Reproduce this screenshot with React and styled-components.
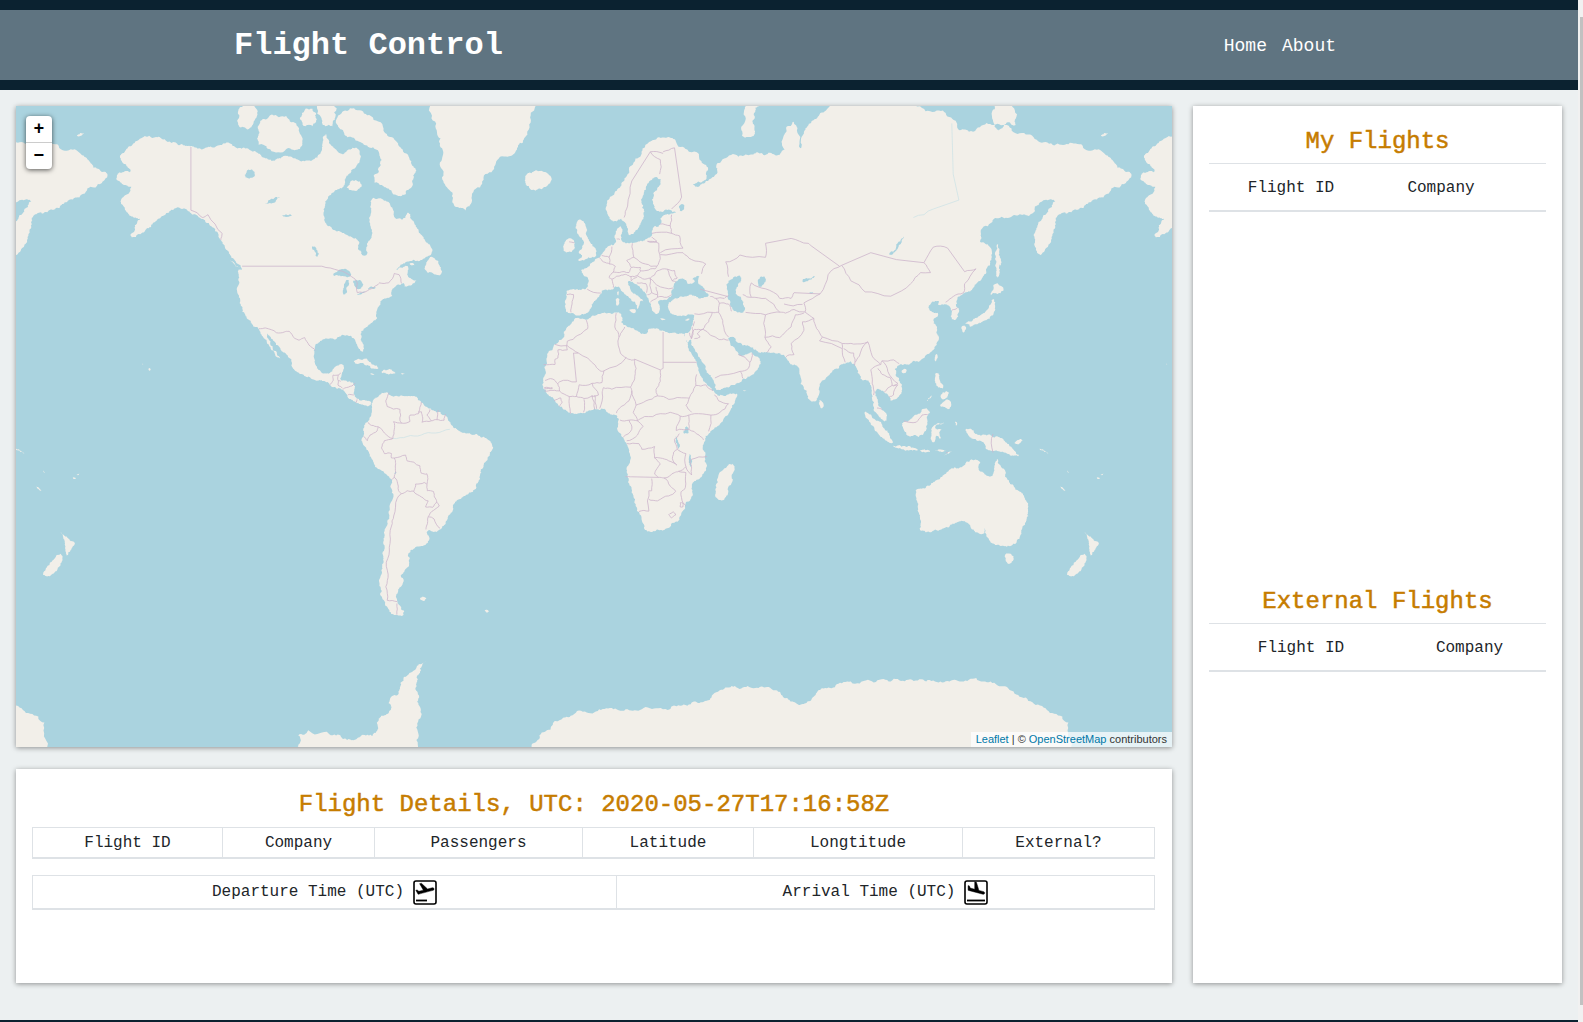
import React from "react";
import styled, { createGlobalStyle } from "styled-components";

const MAP_W = 1156;
const MAP_H = 641;
const LON0_X = 576;
const LAT0_Y = 320.5;
const WORLD = 1024;

// rough coastlines, [lon, lat]
const LAND = [
	// north america
	[[-168,65.6],[-164,66.5],[-162,66.2],[-163,67],[-166.5,68.3],[-163,69.5],[-157,71],[-152,70.7],[-145,70],[-141,69.6],[-135,69.3],[-128,70.2],[-125,69.5],[-118,69],[-115,68],[-110,68],[-108,68.6],[-102,67.8],[-97,68],[-95,69],[-94,71.5],[-92,70],[-88,68.5],[-85,69.5],[-82,69.5],[-81,68],[-84,66.5],[-87,65.5],[-87,64],[-91,63.5],[-93.5,61.8],[-94.7,59],[-92.5,57],[-88,56.3],[-85,55.3],[-82.3,55],[-82.2,52.9],[-80.5,51.3],[-79,51.5],[-79,54],[-77,56],[-78.5,58.7],[-77.5,60],[-78,62.4],[-73.5,62.3],[-70,60.8],[-69.5,58.8],[-66,58.5],[-64.5,60.3],[-62,57.5],[-60,55.5],[-57,53.5],[-55.8,52.3],[-58,51],[-61,50.2],[-65,50.2],[-67,49.3],[-69.5,47.8],[-65,49.2],[-64.5,48.5],[-65,47],[-64,46],[-61,45.5],[-66,43.8],[-66,45],[-67,44.8],[-70,43.7],[-70.8,42.2],[-70,41.7],[-74,40.7],[-75.5,38],[-76,37],[-75.5,35.3],[-78,33.9],[-81,32],[-81.5,30.5],[-80,26.8],[-80.5,25.2],[-81.8,26],[-82.8,28],[-84,30],[-86,30.4],[-89,30.3],[-90,29.2],[-93,29.7],[-95,29.2],[-97.3,27.5],[-97.7,24],[-97.5,21.5],[-95.5,18.8],[-94,18.2],[-91.5,18.6],[-90.5,20.5],[-88,21.5],[-87,20.8],[-87.8,18.3],[-88.8,16],[-86,15.9],[-83.3,15],[-83.7,11.5],[-82.5,9.3],[-80,9.2],[-77.5,8.7],[-77.9,7.2],[-80,7.5],[-81.5,7.8],[-83,8.3],[-85.5,10],[-87.5,13],[-91.5,14],[-94.5,16.2],[-97,15.9],[-101.5,17.5],[-105.5,20],[-105.5,22.5],[-109,26],[-112.5,29.5],[-114.7,31.7],[-113,28],[-110,24],[-109.5,23],[-112,25],[-115,29],[-117.2,32.5],[-120.5,34.5],[-122.5,37.5],[-124.3,40.4],[-124,46.2],[-124.7,48.4],[-122.5,48],[-125,50],[-128,52],[-130.5,54.5],[-133,57],[-137,58.6],[-140,59.8],[-146,60.8],[-149,60],[-152,59],[-154,58],[-158,56.2],[-163,54.8],[-160,58.5],[-158,58.7],[-162,59],[-165,61],[-166,62],[-161,64],[-165,64.5]],
	// greenland
	[[-73,78.2],[-66,81],[-50,82.5],[-32,83.6],[-20,81.5],[-20,77],[-22,72],[-25,69.5],[-32,68],[-40,65],[-43.5,60],[-48,61],[-52,65],[-53,69],[-55,72],[-60,76],[-70,76.2]],
	// canadian islands
	[[-62,66],[-65,63],[-68,62.5],[-72,64],[-78,65],[-73,68],[-80,70],[-88,71],[-90,73.5],[-80,73.7],[-71,71],[-68,70],[-62,67]],
	[[-117,69.5],[-105,69],[-101,70],[-105,73],[-115,73.3],[-118,71]],
	[[-125,72],[-120,71.5],[-117,74],[-124,74.3]],
	[[-95,72],[-90,72],[-91,75.5],[-96,75.5]],
	[[-102,72],[-97,72],[-97,73.8],[-102,73.8]],
	[[-87,63.5],[-80,64],[-84,65.5]],
	[[-59,47.7],[-53,46.7],[-53,48.5],[-56,51.5],[-58,50]],
	[[-128,50.7],[-123.5,48.4],[-125,49]],
	[[-64,49.9],[-62,49.2],[-64,49.2]],
	// caribbean
	[[-85,21.9],[-80,23.2],[-74.2,20.2],[-77.7,19.9],[-78,20.8]],
	[[-74.4,18.5],[-72.8,19.9],[-68.4,18.6],[-71,18]],
	[[-78.3,18.4],[-76.3,18.1],[-77,17.8]],
	[[-67.2,18.5],[-65.6,18.3],[-66.8,17.9]],
	// south america
	[[-77.5,8.5],[-75.5,10.7],[-72,12.2],[-71.5,10.8],[-68,10.7],[-62,10.7],[-60,8.5],[-57,6],[-52,4.8],[-50,1],[-48,-1],[-44,-2.5],[-39,-3],[-35.2,-5.5],[-35,-9],[-39,-14],[-39.5,-18],[-41,-22],[-45,-23.7],[-48.5,-26],[-50,-30],[-53.5,-34],[-55,-35],[-58.3,-34],[-57,-36.5],[-58,-38.3],[-62,-39],[-65,-41],[-63.8,-42.5],[-65.5,-45],[-67.5,-46.5],[-65.8,-47.5],[-69,-51],[-68.3,-52.5],[-65.3,-54.8],[-69,-55.3],[-72,-54],[-75,-50],[-74,-45],[-73,-41],[-73.5,-37],[-71.5,-30],[-70,-20],[-71,-17.5],[-76,-14],[-79,-8],[-81.3,-5],[-80,-2.5],[-80.5,0],[-78.5,2],[-77.5,4],[-77.5,7]],
	[[-61,-51.5],[-58,-51.3],[-59,-52.3]],
	[[-38,-54],[-36,-54.2],[-37,-54.7]],
	// eurasia
	[[-9,37],[-9.5,38.8],[-8.8,42],[-9,43.2],[-4,43.5],[-1.5,43.5],[-1,46],[-4.5,48],[-1.5,48.7],[1.5,50.5],[4,52],[5,53.3],[8.5,53.8],[8.2,56.5],[10.5,57.7],[10,55],[11,54],[14,54],[18.5,54.7],[21,55.3],[21.5,57.5],[24,57.2],[24,59.2],[28,59.6],[30,60],[23,60],[21.5,61],[21.5,63],[25,65],[22,65.8],[18,63],[17.3,61],[18.8,59.8],[16.5,57],[14.5,56],[13,55.5],[11,59],[8,58],[5.5,59],[5,62],[10,64],[14,67.5],[19,70],[25,71],[31,70],[41,67],[40,65],[35,64.5],[37,64],[40,64.8],[44,66],[44,68],[54,68.5],[60,69],[68,68.5],[67,71.5],[72,72.8],[73,68.5],[75,72],[80,73],[87,75],[100,76.5],[105,77.6],[113,74],[125,73.5],[130,71],[140,72.5],[150,71.5],[160,69.7],[170,70],[180,69],[185,67],[190.5,66],[187,64.5],[179,62.5],[175,61.8],[170,60],[164,59.8],[163,58],[162,56],[160,53],[156.7,51],[155.5,56],[157,58],[161,60.3],[163.5,62.3],[156,61.5],[155,59.3],[150,59.5],[142,59],[135,54.7],[140.5,53.5],[140.5,50],[138,46.5],[133,43],[130.5,42.5],[127.5,39.8],[129.5,36.5],[126.5,34.5],[126.5,37.5],[125,39.6],[121.5,39],[122,40.7],[118,39],[119,37.3],[122.5,37],[119.5,35],[122,31],[121.5,28],[117,23.5],[113,22],[109.5,21],[108,21.5],[106,19],[109,14],[109,11.5],[105,8.7],[105,10],[102,12.5],[100,13.4],[99.5,10],[103.5,4],[103.5,1.4],[101,3],[98.5,8],[98,16],[94.5,16],[94,18.5],[91.5,22.5],[89,21.8],[87,21],[82,16.5],[80,15],[80,11],[77.5,8],[75,12],[73,18],[72.5,21],[70,21],[69,22.5],[67,25],[61.5,25],[57,25.8],[56.5,27],[52,27.5],[50,30],[48,30],[48,29],[50,26.5],[51.5,25],[51.5,24.2],[54,24.2],[56,25.5],[56.5,24.5],[59.8,22.5],[57.8,19],[55,17],[52,15.6],[48,14],[45,12.8],[43.3,12.7],[42.7,16.5],[39,21.5],[35,28],[34.8,29.5],[33.5,28],[32.6,30],[32.5,31.2],[34.3,31.3],[35.8,34.5],[36,36.8],[32,36],[30,36.3],[27.5,37],[26.3,39.5],[29,41],[31,41.2],[35,42],[38,41],[41.5,41.5],[39,44],[37,45],[38,47],[35,46],[36.5,45.3],[33.5,44.5],[33,46],[30.5,46],[28,43.5],[28,41.6],[26.2,40.7],[23,40.5],[24,38],[22.8,36.5],[21.5,37.5],[19.5,41],[19,42.5],[13.7,45.5],[12.3,45.3],[14,42.5],[16,41.8],[18.5,40],[17,40.5],[16.5,38.5],[15.7,38],[16,39.5],[12.5,41.5],[10.5,43],[8.8,44.4],[6,43],[3.5,43.3],[3,41.8],[0,39.8],[-0.5,38],[-2,36.8],[-5.4,36.1],[-6.5,37]],
	// europe islands
	[[-5.5,50],[1.4,51.2],[1.7,52.7],[0,53.5],[-2,55.8],[-2,57.5],[-3.5,58.6],[-5.2,58.5],[-6,56.5],[-3,54.8],[-3,53.3],[-5,52],[-3,51.3]],
	[[-10,52],[-6.2,52.2],[-6,54.5],[-8,55.2],[-10,54]],
	[[-24,65.5],[-22,66.4],[-16,66.4],[-13.6,65],[-18.8,63.4],[-22.7,63.9]],
	[[52,71],[55,70.7],[57.5,71],[56,73],[60,74.5],[54,74.5]],
	[[12.5,38],[15.6,38.2],[15,36.7]],
	[[8.3,41],[9.7,41],[9.5,39.2],[8.5,39]],
	[[8.7,42.6],[9.5,43],[9.3,41.5]],
	[[23.5,35.5],[26.3,35.2],[24.7,35]],
	[[32.4,35],[34.5,35.6],[33.8,34.8]],
	[[142,71.2],[146,72.5],[150,72],[146,75],[140,74]],
	[[178.5,71],[182,71.3],[180,70.8]],
	// africa
	[[-5.9,35.8],[-2,35.2],[3,36.9],[10,37.3],[11,35],[10,34],[15,32.3],[19,30.5],[20,32.8],[25,31.7],[29,31],[32.3,31.2],[32.7,29.8],[34,26],[35.5,24],[37.2,21],[37.5,18.5],[39.5,15.3],[43.2,11.7],[44.5,10.4],[51,11.9],[51,10],[48,4.5],[41.5,-2],[39.2,-5],[39.5,-10],[40.7,-15],[35,-20],[35.5,-24],[32.8,-26],[32.5,-28.5],[28,-33],[25.5,-34],[20,-34.8],[18.3,-33.9],[18.2,-32],[15,-27],[14.5,-22.5],[12,-18],[13.7,-11],[12.3,-6],[9,-1],[9.6,3.8],[6,4.3],[4.5,6.3],[1,6],[-3,5],[-7.5,4.4],[-11,6.5],[-13.5,9.5],[-16.8,12.5],[-17.5,14.7],[-16.2,19],[-17,21],[-13,27.5],[-9.8,29.8],[-9.5,32.5],[-6.5,34.5]],
	[[49.3,-12],[50.4,-16],[47,-25],[44,-25],[43.3,-22],[44.5,-16.5]],
	[[52.8,12.6],[54.5,12.5],[53.5,12.3]],
	// asia islands
	[[80,9.7],[81.8,7.5],[80.5,6],[79.8,8]],
	[[130.9,34],[135,35.6],[139,37.5],[141,41.3],[142,39.5],[140.8,35.7],[136.8,34.5],[135,33.6],[132,33.9]],
	[[130,33.5],[131.8,33],[130.7,31.1],[130,32]],
	[[132.5,34],[134.5,34.2],[134,33.3],[132.8,33]],
	[[140,41.6],[141.5,45.4],[145.3,43.5],[143,42],[141,42.5]],
	[[142,46],[143.5,46.8],[143,49.5],[144,49],[143,54],[142,53.5],[142.2,49]],
	[[120.2,23],[121.5,25.3],[121,22]],
	[[108.7,19.3],[110.5,20],[110.5,18.6],[109.3,18.2]],
	[[120.5,16],[120.7,18.5],[122.2,18.4],[122,16],[124,13],[121,13.8]],
	[[122,7.2],[123.5,8.7],[125.5,9.7],[126.5,7.5],[125.5,5.8],[124,6.8]],
	[[122.5,11.7],[125.5,12.5],[125,10.2],[123,9.2]],
	[[117.2,8.4],[119.5,11.2],[119.4,10.3]],
	[[95.3,5.6],[98,4],[104,-2],[106,-5.8],[104.5,-5.8],[101,-3],[97,2]],
	[[105.2,-6.7],[108.5,-6.6],[114.5,-7.7],[114.4,-8.7],[108,-7.8]],
	[[115,-8.2],[118.5,-8.3],[119,-8.8],[116,-9]],
	[[119.8,-8.5],[125,-8.2],[123,-8.9]],
	[[123.5,-10.2],[127.3,-8.4],[125,-9.7]],
	[[109,1.5],[111,1.8],[113,3.2],[117,7],[119,5],[117.6,3.5],[118,1],[116,-3.8],[111,-3.2],[109,0]],
	[[119.5,-5.5],[119,-3],[120,0.8],[124.8,1.5],[120.8,0.4],[120.5,-1],[123.2,-1],[122,-2],[122.8,-4.8],[121,-2.8],[120.5,-5.5]],
	[[127.5,1.8],[128.5,1.5],[128,0]],
	[[131,-0.8],[134,-0.8],[135,-3.3],[141,-2.7],[146,-5.5],[148,-8],[150.8,-10.5],[147,-10],[143.5,-8.5],[138.5,-8.3],[138,-5.5],[133,-4],[132,-2.8]],
	[[148,-5.6],[152,-4.2],[150,-6.3]],
	// oceania
	[[113.7,-22],[114.2,-26],[115.7,-32],[115,-34.3],[118,-35],[123.5,-33.9],[129,-31.6],[131.5,-31.5],[135,-34.8],[138,-35.5],[138,-33],[138.2,-35.5],[140.5,-38],[144,-38.5],[146.4,-39],[150,-37.5],[151.3,-33.8],[153.2,-30],[153.2,-25.5],[149,-21],[146,-18.8],[145.3,-15],[143.5,-14],[142.5,-10.8],[141.6,-13],[141,-17],[139.5,-17.5],[135.5,-15],[136.8,-12],[132.5,-11.3],[129.5,-14.8],[127,-14],[124,-16.5],[122,-18],[119,-20],[114,-21.8]],
	[[144.7,-40.7],[148.3,-40.9],[148,-43],[146,-43.6]],
	[[172.7,-34.4],[175.5,-36.5],[178.5,-37.7],[177,-39.5],[175.3,-41.6],[174.8,-39.8],[174.7,-38],[174.4,-36.5]],
	[[172.7,-40.5],[174.2,-41.7],[172.8,-43.8],[170.7,-45.9],[168.3,-46.6],[166.5,-46],[170,-43]],
	[[164,-20.2],[167,-22.3],[165.5,-21.8]],
	[[177.3,-17.5],[178.7,-17.8],[178,-18.3]],
	[[178.6,-16.8],[180,-16.2],[179.5,-16.9]],
	[[157,-7.5],[160,-9],[160.8,-9.8],[158.5,-8.6]],
	[[167,-15.2],[167.8,-16],[167.2,-15.9]],
	[[-156,20.2],[-155,19.8],[-155.6,19]],
	[[-158.2,21.6],[-157.7,21.4],[-158,21.3]],
	// antarctica
	[[-190,-78],[-160,-78],[-140,-76],[-128,-74.2],[-120,-74.9],[-104,-74.7],[-103,-72.3],[-90,-72.6],[-85,-73.6],[-80,-72.8],[-76,-73],[-75.5,-71],[-70,-70],[-72,-69],[-68,-68],[-67,-66],[-63,-64.8],[-58,-63.2],[-60,-64],[-62,-66],[-61,-68.5],[-61,-72],[-60.5,-75.5],[-25,-75.5],[-21,-74],[-15,-72],[-10,-71],[0,-70],[10,-70],[20,-70],[33,-69.5],[40,-69],[48,-67],[57,-67],[65,-67.5],[70,-69],[75,-69.5],[80,-67.5],[88,-66.5],[100,-66],[110,-66],[120,-66.5],[130,-66],[140,-66.5],[150,-68],[160,-70],[170,-72],[165,-78],[190,-78],[190,-85],[-190,-85]],
];

const WATER = [
	[[47,45],[51,47],[53,46],[51,44.5],[50.5,42],[53,41],[54,37],[50,37.3],[49,39],[47.5,43]],
	[[58.5,46.5],[61.5,46.5],[60,44],[58.5,44]],
	[[-92,46.7],[-88,48.5],[-85,47.8],[-84.7,46.5],[-87,46.5]],
	[[-87.8,42],[-86.5,42],[-85,45.8],[-87,45.5]],
	[[-84,46],[-80,45],[-81.5,43.2],[-83.5,44]],
	[[-83.3,41.7],[-79,42.8],[-81,42.7]],
	[[-79.5,43.3],[-76,43.5],[-76.5,44.2]],
	[[-99,53.5],[-96.5,50.5],[-96.5,53]],
	[[-116,61],[-109,62.5],[-112,62.5]],
	[[-123,65.5],[-118,65.5],[-120,67]],
	[[-110,59.3],[-105,59.2],[-107,59.6]],
	[[31.8,-2.5],[33,0.3],[34,-0.5],[34,-2.5]],
	[[29.2,-3.5],[29.8,-3.5],[31,-8.5],[30.4,-8.5]],
	[[34,-9.8],[34.6,-9.8],[35,-14],[34.4,-14]],
	[[104,51.6],[108,54],[110,55.7],[109.5,55],[107,52.5],[105.5,51.5]],
	[[74,46],[79,46.8],[77,46],[74,44.9]],
	[[31,60],[32.5,60.5],[32,61.5],[30.5,61]],
	[[-69,-15.5],[-69.6,-16.5],[-68.8,-16.3]],
	[[76,42.5],[78.5,42.6],[77,42.2]],
];

const RIVERS = [
	[[126.5,72.3],[127,66],[129,62],[120,60.5],[113,59]],
	[[-50,-1],[-55,-2.3],[-60,-3],[-65,-3.5],[-70,-4.2]],
];

const BORDERS = [
	[[-123,49],[-95,49],[-89,48],[-84.5,46.5],[-82.5,45],[-82.5,42.5],[-79,43],[-76,44.3],[-74.7,45],[-71.5,45],[-69.5,47.3],[-67.8,47],[-67,44.9]],
	[[-141,69.6],[-141,60.3],[-137,59],[-135,59.5],[-130,56],[-130.5,54.7]],
	[[-117.1,32.5],[-114.7,32.7],[-111,31.3],[-108.2,31.5],[-106.5,31.7],[-104.5,29.5],[-103,29],[-101,29.8],[-99.5,27.5],[-97.2,25.9]],
	[[-92.2,14.5],[-91,16],[-91,17.8],[-89.2,17.8],[-88.3,18.5]],
	[[-89.2,17.8],[-89.2,15.9],[-88.3,15.7]],
	[[-89.2,15.9],[-89.3,14.4],[-87.8,13.3]],
	[[-87.5,13],[-85,14],[-83.2,15]],
	[[-85.7,11.1],[-83.7,11]],
	[[-83,8.3],[-82.6,9.5]],
	[[-71.3,11.8],[-72.5,9],[-72,7],[-67.5,6],[-67.5,2],[-66.9,1.2]],
	[[-60,8.5],[-61,5],[-60,5.2]],
	[[-66.9,1.2],[-64,1.8],[-64,4],[-61,4.5],[-60.8,5.2]],
	[[-60,5.2],[-59.5,3],[-59.8,1.5],[-56.5,2]],
	[[-57,6],[-58,4],[-56.5,2]],
	[[-54,5.8],[-54.5,2.4]],
	[[-56.5,2],[-54.5,2.4],[-52,2.2],[-51.5,4.4]],
	[[-66.9,1.2],[-69.8,1.7],[-69.5,-1],[-70,-4.2]],
	[[-70,-4.2],[-73,-2.3],[-75.2,-0.1]],
	[[-75.2,-0.1],[-77.5,0.4],[-78.8,1.4]],
	[[-75.2,-0.1],[-75.5,-1.5],[-78,-3],[-79,-5],[-80.3,-3.4]],
	[[-70,-4.2],[-73,-5],[-74,-7.5],[-73,-9.5],[-70.5,-9.5],[-70.5,-11],[-69.5,-11]],
	[[-69.5,-11],[-69,-13],[-69,-16],[-69.5,-17.5]],
	[[-70.4,-18.3],[-69.5,-17.5],[-68.5,-19],[-68,-22],[-67,-23],[-68.5,-24.5],[-69.7,-30],[-70.5,-33],[-71,-38],[-71.8,-42],[-71.7,-46],[-72.5,-49],[-72,-52],[-68.5,-52.3]],
	[[-68.6,-52.7],[-68.6,-55]],
	[[-69.5,-11],[-65.5,-10],[-65,-12],[-60.5,-13.7],[-60,-16.2],[-58,-16.4],[-57.7,-18],[-58,-20]],
	[[-67,-23],[-65,-22],[-62.7,-22.2]],
	[[-62.7,-22.2],[-62,-19.8],[-59,-19.3],[-58,-20]],
	[[-62.7,-22.2],[-60,-24],[-57.6,-25.3],[-58.5,-27.2],[-56,-27.3],[-54.6,-25.6]],
	[[-58,-20],[-57.9,-22],[-55.7,-22.3],[-55.4,-24],[-54.6,-25.6]],
	[[-54.6,-25.6],[-53.7,-26.9],[-55.8,-28.3],[-57.6,-30.2]],
	[[-57.6,-30.2],[-58.2,-33],[-58.4,-34]],
	[[-57.6,-30.2],[-55.5,-30.9],[-53.4,-33.7]],
	// africa
	[[-2,35],[-1.5,32.5],[-5,30.5],[-8.7,28.7]],
	[[-8.7,27.3],[-13,27.7]],
	[[-8.7,28.7],[-8.7,26],[-12,26],[-12,23.4],[-13,23],[-13,21.3],[-17,21.3]],
	[[-8.7,27.3],[-4.8,25],[1.2,21],[3.2,19],[4.2,19.2]],
	[[-4.8,25],[-6.5,25],[-5.5,15.5],[-11.5,15.5],[-12,14.8]],
	[[-16.5,16],[-14,16.5],[-12,14.8],[-11.4,12.4]],
	[[-16.8,13.5],[-14,13.5],[-14,13.2],[-16.8,13.1]],
	[[-16.7,12.4],[-13.7,12.6],[-11.4,12.4]],
	[[-13.3,9],[-11,10],[-10.5,8.5],[-11.5,7]],
	[[-11.4,12.4],[-8,10.5],[-8,8],[-7.5,4.5]],
	[[-3,5],[-2.8,9.5]],
	[[1,6],[0,11]],
	[[1.6,6.2],[1,11]],
	[[2.7,6.3],[3.6,11.7]],
	[[-8,10.5],[-5.5,10.5],[-2.8,9.8],[2.3,11],[0,15],[-4.5,14.5],[-5.5,10.5]],
	[[4.2,19.2],[3.5,15.3],[0,15]],
	[[3.6,11.7],[4,13.5],[7,13],[13.5,13.7]],
	[[4.2,19.2],[12,23.5],[14,22.7],[15,23],[15.5,20],[15,16.5],[13.5,13.7]],
	[[8.5,37],[8,33],[9.5,30]],
	[[9.5,30],[10,25],[12,23.5]],
	[[11.5,33],[10,31],[9.5,30]],
	[[15,23],[24,19.5]],
	[[24,19.5],[25,20],[25,31.5]],
	[[25,22],[36.8,22]],
	[[24,19.5],[24,15.7],[22.5,13],[23,10.7]],
	[[23,10.7],[19,9],[15.5,7.5]],
	[[15.5,7.5],[14,12.5],[13.5,13.7]],
	[[14,12.5],[13,9],[9.7,6.5],[8.6,4.7]],
	[[15.5,7.5],[14.5,5],[16,2]],
	[[9.8,2.3],[13,2.2],[16,2]],
	[[13,2.2],[14,-1],[11,-3.7]],
	[[16,2],[18.5,3.5],[24,4.5],[27.5,5]],
	[[16,2],[18,0],[16,-3],[12.2,-5]],
	[[23,10.7],[27,9.5],[33,10],[34.2,10]],
	[[34.2,10],[33,7.5],[35,5]],
	[[27.5,5],[31,3.7],[34,4]],
	[[36.8,18],[36.5,14.3],[34.2,10]],
	[[36.5,14.3],[40,14.5],[42.5,12.5]],
	[[43,11],[44.5,9],[48,8],[45,5],[41.8,4]],
	[[34,4],[36,4.5],[41.8,4],[41,-1.7]],
	[[34,4],[34,1],[34,-1]],
	[[34,-1],[37.6,-3],[39.2,-4.7]],
	[[31,3.7],[29.6,-1.4]],
	[[29.6,-1.4],[30.7,-1],[34,-1]],
	[[29,-4.5],[30.7,-2.5]],
	[[29,-4.5],[30,-8]],
	[[30,-8],[28.7,-9],[28.5,-12],[29.8,-13.4],[27,-12],[24,-11],[22,-11]],
	[[22,-11],[22,-7],[17.5,-8],[16.5,-6],[12.2,-6]],
	[[22,-11],[24,-13],[22,-16.5],[23.4,-17.6]],
	[[11.8,-17.3],[14,-17.4],[23.4,-17.6]],
	[[21,-18],[21,-22],[20,-22],[20,-28.5]],
	[[16.5,-28.6],[20,-28.5]],
	[[20,-24.8],[23,-25.3],[27,-23.7],[29.4,-22.2]],
	[[23.4,-17.6],[25.3,-17.8],[29,-16],[30.4,-15.6]],
	[[25.3,-17.8],[27.5,-20.5],[29.4,-22.2]],
	[[30.4,-15.6],[33,-16],[32.8,-21],[31.3,-22.4],[32,-26],[32.9,-26.8]],
	[[33,-14],[35,-16.8],[35,-14.5],[34.5,-12],[34.9,-11.5],[40.4,-10.5]],
	[[30,-8],[33,-9.5],[33,-14],[30.4,-15.6]],
	[[27,-29.6],[28.5,-28.7],[29.4,-29.7],[28,-30.6],[27,-29.6]],
	[[31,-25.9],[32,-26],[32,-27.2],[31,-27.2],[31,-25.9]],
	// europe
	[[-8.8,42],[-6.5,42],[-7,39.5],[-7.4,37.2]],
	[[-1.7,43.4],[3.1,42.4]],
	[[7.5,43.8],[7,45.9]],
	[[7,45.9],[6,46.3],[7.5,47.6],[8.2,49],[6.2,49.5],[4,50],[2.5,51]],
	[[6.2,49.5],[6,51],[7,53.3]],
	[[3.4,51.4],[6,51]],
	[[14.2,54],[14.7,51],[12.2,50.3]],
	[[8.7,54.9],[9.8,54.8]],
	[[7.5,47.6],[9.6,47.5],[13,47.5],[13.8,48.7],[12.2,50.3]],
	[[7,45.9],[10.4,46.9],[12.2,47],[13.7,46.5],[13.7,45.6]],
	[[13.8,48.7],[17,48.7],[17,47.7],[16,46.8],[13.7,46.5]],
	[[14.7,51],[18.8,49.5],[22.8,49],[24,50.7],[23.5,54],[19.5,54.4]],
	[[17,48],[19,48],[22.2,48.4],[22.8,49]],
	[[16,46.8],[18.5,45.9],[20.5,46.2],[22.9,47.9]],
	[[20.3,46],[22.7,44.5],[28.5,43.7]],
	[[22.9,47.9],[26.5,48.3],[28.2,45.5],[29.6,45.2]],
	[[26.5,48.3],[29,48],[30,46.2],[28.2,45.5]],
	[[22.5,44],[23,41.3],[26.3,41.3],[28,42]],
	[[13.7,45.5],[16,46.5]],
	[[15.8,45],[19,44.8],[19.2,42.5]],
	[[20.5,46.2],[21,42.5],[19.5,42]],
	[[20.5,40],[23,41.3]],
	[[21,42.5],[23,42]],
	[[21,56],[28,56]],
	[[24,57.8],[27.5,57.5]],
	[[28,59.5],[27.5,57.5],[28,56],[30.8,55.5],[32,53],[24,52]],
	[[24,51.6],[32,52]],
	[[32,52],[35,50.5],[40,49.5],[38.5,47.2]],
	[[19.5,54.4],[22.8,54.4],[21,55.3]],
	[[11.3,59],[12.5,61],[14,65],[20.5,69],[25,68.8]],
	[[23.8,66],[24,68],[20.5,69]],
	[[25,69],[29,69.5],[31.5,62.5],[28,60.5]],
	[[-8,54.3],[-6.2,54.1]],
	// west asia
	[[38,43.4],[47.7,41.5]],
	[[41.6,41.5],[43.5,41],[46.5,41],[48,41.8]],
	[[44.8,39.7],[44.5,37.2]],
	[[43.5,41],[44.8,39.7],[48,39.5],[49,37.5]],
	[[36,36.8],[42.3,37.2],[44.5,37.2]],
	[[44.5,37.2],[46,34],[48,30]],
	[[42.3,37.2],[41,34.5],[39,32.3]],
	[[39,32.3],[36,32.3],[35,29.5]],
	[[39,32.3],[37,31],[38,30],[36,29.5]],
	[[35.2,33],[35.5,31.3],[34.9,29.5]],
	[[34.3,31.3],[34.9,29.5]],
	[[36,34.6],[35.6,33.2]],
	[[39,32.3],[44.7,29.2],[48,29]],
	[[51.5,24.5],[55.5,22],[55,20],[52,19],[43.2,16.8]],
	[[52,19],[53,16.7]],
	[[55.5,22],[56.3,24.9]],
	[[61,36.5],[61,31.5],[60.8,29.9],[63,27],[61.6,25.2]],
	[[60.8,29.9],[66,29.8],[70,33],[71.5,36.5],[74.5,37]],
	[[54,37.2],[61,36.5]],
	[[61,36.5],[65,37.3],[68,37],[71,38],[74.9,37.3]],
	[[53,42],[56,41.3],[56,45],[61,43.5],[66,41],[70,41],[71,42.5],[80.2,42.2]],
	[[56,41.3],[61,41],[66,37.3]],
	[[67.5,39.5],[74,39.4]],
	[[48,46.5],[47,50],[52,51.5],[61,51],[61,54],[70,55],[76,54],[77,53.5],[87,49]],
	// east asia
	[[87.8,49.2],[98,52],[107,50.5],[116.7,49.8],[119,47.5],[115.5,47.5],[112,44.8],[105,41.6],[96,42.7],[91,45.5],[87.8,49.2]],
	[[87.8,49.2],[83,47],[80.2,42.2],[74.5,39.8],[74.9,37.3],[78,35.5],[79,32.5],[81,30],[88,28],[92,27.8],[97,28.5],[98.5,24],[101.5,21.3],[102,22.5],[106,22.8],[108,21.6]],
	[[116.7,49.8],[120,53.2],[125,53],[131,47.7],[135,48.4],[131,44.8],[130.6,42.5]],
	[[130.6,42.5],[127,41.5],[124.3,40]],
	[[126.5,37.8],[128.5,38.5]],
	[[68.2,23.8],[71,24.5],[70,28],[74.5,32],[74,34.5],[78,35.5]],
	[[81,30],[80,28.8],[88,26.4],[88,28]],
	[[88,26.4],[89,22]],
	[[88.5,26.4],[92,25],[92.3,21]],
	[[97,28.5],[94,24],[92.5,22]],
	[[101.5,21.3],[98,19.5],[98.5,15],[99,11]],
	[[100.5,20],[102,18],[104.8,17],[105.5,14.3]],
	[[102,22.5],[104,19],[107.5,15],[106,14]],
	[[102.8,12],[105.5,14.3],[107.5,14.5],[106,11],[104.5,10.4]],
	[[100.2,6.5],[102,6]],
	[[109.6,2],[114,1.5],[116,4],[118,4.2]],
	[[141,-2.6],[141,-9.1]],
	[[124.5,-9.2],[125,-9]],
];

const project = ([lon, lat]) => [
	LON0_X + (lon * WORLD) / 360,
	LAT0_Y - (WORLD / (2 * Math.PI)) * Math.log(Math.tan(Math.PI / 4 + (lat * Math.PI) / 360)),
];

// fixed seed so the coast looks the same on every load
let seed = 1234;
const rand = () => {
	seed = (seed * 16807) % 2147483647;
	return seed / 2147483647 - 0.5;
};

const chaikin = (pts) => {
	const out = [];
	pts.forEach((p, i) => {
		const q = pts[(i + 1) % pts.length];
		out.push([p[0] * 0.75 + q[0] * 0.25, p[1] * 0.75 + q[1] * 0.25]);
		out.push([p[0] * 0.25 + q[0] * 0.75, p[1] * 0.25 + q[1] * 0.75]);
	});
	return out;
};

// midpoint displacement, makes straight segments look like a coast or a border
const roughen = (pts, closed, amp, maxLen) => {
	const out = [];
	const count = closed ? pts.length : pts.length - 1;
	for (let i = 0; i < count; i++) {
		const p = pts[i];
		const q = pts[(i + 1) % pts.length];
		const dx = q[0] - p[0];
		const dy = q[1] - p[1];
		const len = Math.hypot(dx, dy);
		out.push(p);
		if (len > 1.2 && len < maxLen) {
			const k = rand() * amp;
			out.push([(p[0] + q[0]) / 2 - dy * k, (p[1] + q[1]) / 2 + dx * k]);
		}
	}
	if (!closed) out.push(pts[pts.length - 1]);
	return out;
};

const coast = (line) => {
	let pts = chaikin(line.map(project));
	for (let i = 0; i < 3; i++) pts = roughen(pts, true, 0.45, 200);
	return pts;
};

const border = (line) => {
	let pts = line.map(project);
	for (let i = 0; i < 2; i++) pts = roughen(pts, false, 0.22, 26);
	return pts;
};

const toPath = (lines, close) =>
	lines
		.map((pts) => "M" + pts.map((p) => `${p[0].toFixed(1)} ${p[1].toFixed(1)}`).join("L") + (close ? "Z" : ""))
		.join("");

const LAND_PATH = toPath(LAND.map(coast), true);
const WATER_PATH = toPath(WATER.map(coast), true);
const BORDER_PATH = toPath(BORDERS.map(border), false);
const RIVER_PATH = toPath(RIVERS.map(border), false);

const DETAIL_COLS = [
	["Flight ID", 190],
	["Company", 152],
	["Passengers", 208],
	["Latitude", 171],
	["Longtitude", 209],
	["External?", 192],
];

function WorldMap() {
	return (
		<MapSvg viewBox={`0 0 ${MAP_W} ${MAP_H}`}>
			{[-WORLD, 0, WORLD].map((dx) => (
				<g key={dx} transform={`translate(${dx} 0)`}>
					<path d={LAND_PATH} fill="#f2efe9" />
					<path d={WATER_PATH} fill="#aad3df" />
					<path d={RIVER_PATH} fill="none" stroke="#cfe3e6" strokeWidth="0.8" />
					<path d={BORDER_PATH} fill="none" stroke="#cdb5cb" strokeWidth="0.8" />
				</g>
			))}
		</MapSvg>
	);
}

function TakeoffIcon() {
	return (
		<TimeIcon viewBox="0 0 24 25">
			<rect x="1" y="1" width="22" height="23" rx="2" fill="#fff" stroke="#000" strokeWidth="1.6" />
			<path
				transform="translate(1.6 0) scale(0.9)"
				stroke="#000"
				strokeWidth="0.5"
				d="M21.57 9.64c-.21-.8-1.04-1.28-1.84-1.06L14.42 10 7.52 3.57l-1.93.51 4.14 7.17-4.97 1.33-1.97-1.54-1.45.39 2.59 4.49s7.12-1.9 16.57-4.43c.81-.23 1.28-1.05 1.07-1.85z"
			/>
			<rect x="3" y="19.6" width="11" height="1.8" />
		</TimeIcon>
	);
}

function LandingIcon() {
	return (
		<TimeIcon viewBox="0 0 24 25">
			<rect x="1" y="1" width="22" height="23" rx="2" fill="#fff" stroke="#000" strokeWidth="1.6" />
			<path
				transform="translate(1.6 0) scale(0.9)"
				stroke="#000"
				strokeWidth="0.5"
				d="M9.68 13.27l4.35 1.16 5.31 1.42c.8.21 1.62-.26 1.84-1.06.21-.8-.26-1.62-1.06-1.84l-5.31-1.42-2.76-9.02L10.12 2v8.28L5.15 8.95l-.93-2.32-1.45-.39v5.17l1.6.43 5.31 1.43z"
			/>
			<rect x="3" y="19.6" width="18" height="1.8" />
		</TimeIcon>
	);
}

export default function App() {
	return (
		<Screen>
			<GlobalStyle />
			<Page>
				<Header>
					<Title>Flight Control</Title>
					<Nav>
						<NavLink>Home</NavLink>
						<NavLink>About</NavLink>
					</Nav>
				</Header>
				<Main>
					<LeftColumn>
						<MapCard>
							<WorldMap />
							<ZoomBar>
								<ZoomButton>+</ZoomButton>
								<ZoomButton>−</ZoomButton>
							</ZoomBar>
							<Attribution>
								<MapLink>Leaflet</MapLink> | © <MapLink>OpenStreetMap</MapLink> contributors
							</Attribution>
						</MapCard>
						<DetailsCard>
							<DetailsHeading>Flight Details, UTC: 2020-05-27T17:16:58Z</DetailsHeading>
							<DetailTable>
								<tbody>
									<tr>
										{DETAIL_COLS.map(([label, w]) => (
											<DetailCell key={label} $w={w}>{label}</DetailCell>
										))}
									</tr>
								</tbody>
							</DetailTable>
							<DetailTable $gap>
								<tbody>
									<tr>
										<TimeCell $w={584}>
											<TimeLabel>Departure Time (UTC)<TakeoffIcon /></TimeLabel>
										</TimeCell>
										<TimeCell $w={538}>
											<TimeLabel>Arrival Time (UTC)<LandingIcon /></TimeLabel>
										</TimeCell>
									</tr>
								</tbody>
							</DetailTable>
						</DetailsCard>
					</LeftColumn>
					<FlightsCard>
						<FlightSection>
							<SectionHeading>My Flights</SectionHeading>
							<ListHeader $cols="164px 136px 1fr">
								<span>Flight ID</span>
								<span>Company</span>
							</ListHeader>
						</FlightSection>
						<FlightSection>
							<SectionHeading>External Flights</SectionHeading>
							<ListHeader $cols="184px 153px">
								<span>Flight ID</span>
								<span>Company</span>
							</ListHeader>
						</FlightSection>
					</FlightsCard>
				</Main>
				<Footer />
			</Page>
			<ScrollTrack>
				<ScrollThumb />
			</ScrollTrack>
		</Screen>
	);
}

const GlobalStyle = createGlobalStyle`
	html, body {
		margin: 0;
		padding: 0;
		overflow: hidden;
	}
	body {
		font-family: "Liberation Mono", "Courier New", monospace;
		color: #212529;
	}
`;

const Screen = styled.div`
	display: flex;
	width: 1583px;
	height: 1022px;
	overflow: hidden;
`;

const Page = styled.div`
	display: flex;
	flex-direction: column;
	width: 1578px;
	background: #ecf0f1;
`;

const Header = styled.header`
	display: flex;
	justify-content: space-between;
	align-items: center;
	box-sizing: border-box;
	height: 90px;
	padding: 0 242px 0 234px;
	background: #5f7481;
	border-top: 10px solid #0b2230;
	border-bottom: 10px solid #0b2230;
`;

const Title = styled.h1`
	margin: 0;
	font-size: 32px;
	font-weight: 700;
	color: #fff;
`;

const Nav = styled.nav`
	display: flex;
	gap: 15px;
	padding-top: 2px;
`;

const NavLink = styled.a`
	font-size: 18px;
	color: #fff;
`;

const Main = styled.main`
	flex: 1;
	display: grid;
	grid-template-columns: 1156px 369px;
	gap: 21px;
	padding: 16px 16px 0;
	min-height: 0;
`;

const LeftColumn = styled.div`
	display: flex;
	flex-direction: column;
	gap: 22px;
`;

const Card = styled.section`
	background: #fff;
	box-shadow: 0 1px 5px rgba(0, 0, 0, 0.4);
`;

const MapCard = styled(Card)`
	position: relative;
	height: 641px;
	overflow: hidden;
	background: #aad3df;
`;

const MapSvg = styled.svg`
	display: block;
	width: 1156px;
	height: 641px;
`;

const ZoomBar = styled.div`
	position: absolute;
	top: 10px;
	left: 10px;
	width: 26px;
	border-radius: 4px;
	box-shadow: 0 1px 5px rgba(0, 0, 0, 0.65);
	background: #fff;
`;

const ZoomButton = styled.a`
	display: block;
	height: 26px;
	text-align: center;
	font: bold 18px/26px "Liberation Mono", monospace;
	color: #000;
	&:first-child {
		border-bottom: 1px solid #ccc;
	}
`;

const Attribution = styled.div`
	position: absolute;
	right: 0;
	bottom: 0;
	padding: 0 5px;
	font: 11px/15.4px "Liberation Sans", Arial, sans-serif;
	color: #333;
	background: rgba(255, 255, 255, 0.7);
`;

const MapLink = styled.a`
	color: #0078a8;
`;

const DetailsCard = styled(Card)`
	height: 214px;
	box-sizing: border-box;
	padding: 16px;
`;

const DetailsHeading = styled.h2`
	margin: 0;
	height: 42px;
	line-height: 40px;
	text-align: center;
	font-size: 24px;
	font-weight: 400;
	-webkit-text-stroke: 0.5px #c67c00;
	color: #c67c00;
`;

const DetailTable = styled.table`
	width: 1122px;
	margin-top: ${(p) => (p.$gap ? "16px" : "0")};
	border-collapse: collapse;
	table-layout: fixed;
	font-size: 16px;
`;

const DetailCell = styled.td`
	width: ${(p) => p.$w}px;
	box-sizing: border-box;
	height: 30px;
	padding: 2px 0 0;
	text-align: center;
	border: 1px solid #dee2e6;
	border-bottom-width: 2px;
`;

const TimeCell = styled(DetailCell)`
	height: 34px;
	padding: 1px 0 0;
`;

const TimeLabel = styled.span`
	display: inline-flex;
	align-items: center;
	gap: 9px;
	white-space: pre;
`;

const TimeIcon = styled.svg`
	display: block;
	width: 24px;
	height: 25px;
`;

const FlightsCard = styled(Card)`
	height: 877px;
	box-sizing: border-box;
	padding: 16px;
`;

const FlightSection = styled.div`
	height: 460px;
`;

const SectionHeading = styled.h2`
	margin: 0;
	height: 41px;
	line-height: 40px;
	text-align: center;
	font-size: 24px;
	font-weight: 400;
	-webkit-text-stroke: 0.5px #c67c00;
	color: #c67c00;
`;

const ListHeader = styled.div`
	display: grid;
	grid-template-columns: ${(p) => p.$cols};
	align-items: center;
	box-sizing: border-box;
	height: 49px;
	padding-top: 2px;
	font-size: 16px;
	text-align: center;
	border-top: 1px solid #dee2e6;
	border-bottom: 2px solid #dee2e6;
`;

const Footer = styled.footer`
	height: 2px;
	background: #0b2230;
`;

const ScrollTrack = styled.div`
	width: 5px;
	background: #f1f1f1;
`;

const ScrollThumb = styled.div`
	width: 3px;
	height: 988px;
	margin: 17px 0 0 2px;
	background: #c1c1c1;
`;
